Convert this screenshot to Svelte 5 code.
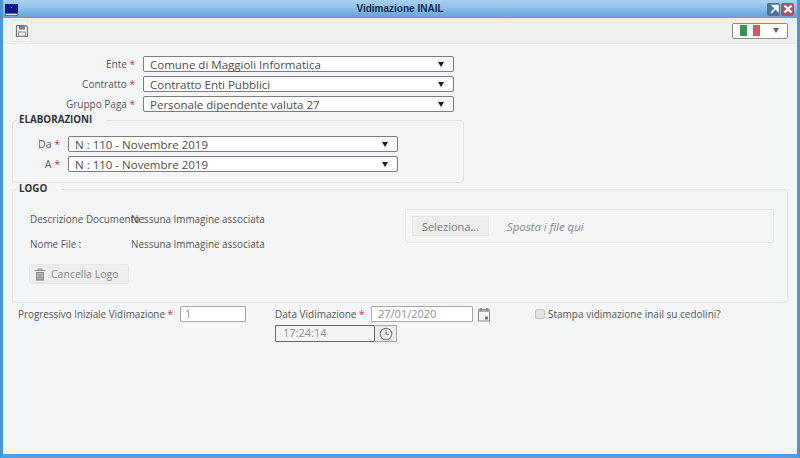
<script>
	const testata = [
		{ label: 'Ente', value: 'Comune di Maggioli Informatica' },
		{ label: 'Contratto', value: 'Contratto Enti Pubblici' },
		{ label: 'Gruppo Paga', value: 'Personale dipendente valuta 27' }
	];
	const elaborazioni = [
		{ label: 'Da', value: 'N : 110 - Novembre 2019' },
		{ label: 'A', value: 'N : 110 - Novembre 2019' }
	];
</script>

<div class="window">
	<header class="titlebar">
		<svg class="logo" width="13" height="12" viewBox="0 0 13 12">
			<rect width="13" height="9" fill="#14148c" />
			<rect y="9" width="13" height="3" fill="#6072a8" />
			<rect x="1" y="10" width="11" height="1" fill="#d8dcec" />
			<rect x="6" y="3" width="1" height="1" fill="#c9b84a" />
		</svg>
		<h1>Vidimazione INAIL</h1>
		<div class="winbtns">
			<span class="winbtn restore">
				<svg width="12" height="12" viewBox="0 0 12 12"><path d="M3 10 L9 4 M4.5 2.5 H10 V8 Z" stroke="#fff" stroke-width="1.6" fill="#fff" /></svg>
			</span>
			<span class="winbtn close">
				<svg width="12" height="12" viewBox="0 0 12 12"><path d="M2.5 2.5 L9.5 9.5 M9.5 2.5 L2.5 9.5" stroke="#fff" stroke-width="2.4" /></svg>
			</span>
		</div>
	</header>

	<div class="toolbar">
		<button class="save" aria-label="Salva">
			<svg width="14" height="14" viewBox="0 0 14 14">
				<path d="M1.5 1.5 H11 L12.5 3 V12.5 H1.5 Z" fill="none" stroke="#777" stroke-width="1.2" />
				<rect x="4" y="1.5" width="6" height="4" fill="#808080" />
				<rect x="3.5" y="8" width="7" height="4" fill="none" stroke="#999" />
			</svg>
		</button>
		<div class="lang">
			<span class="flag"><i class="green"></i><i class="white"></i><i class="red"></i></span>
			<span class="arrow"></span>
		</div>
	</div>

	<main class="content">
		<div class="head-rows">
			{#each testata as row}
				<div class="row">
					<span class="lbl lbl-head">{row.label} <b>*</b></span>
					<div class="select wide"><span>{row.value}</span><i class="arrow dark"></i></div>
				</div>
			{/each}
		</div>

		<fieldset class="box elab">
			<legend>ELABORAZIONI</legend>
			{#each elaborazioni as row}
				<div class="row">
					<span class="lbl lbl-elab">{row.label} <b>*</b></span>
					<div class="select mid"><span>{row.value}</span><i class="arrow dark"></i></div>
				</div>
			{/each}
		</fieldset>

		<fieldset class="box logobox">
			<legend>LOGO</legend>
			<div class="logo-grid">
				<div class="logo-info">
					<div class="info-row"><span class="info-lbl">Descrizione Documento :</span><span class="info-val">Nessuna Immagine associata</span></div>
					<div class="info-row second"><span class="info-lbl">Nome File :</span><span class="info-val">Nessuna Immagine associata</span></div>
					<button class="cancel">
						<svg width="12" height="13" viewBox="0 0 12 13">
							<path d="M1 2.5 H11 M4 2.5 V1 H8 V2.5" stroke="#8a8a8a" fill="none" />
							<path d="M2 4 H10 V12.5 H2 Z" fill="#8a8a8a" />
							<path d="M4 5 V11.5 M6 5 V11.5 M8 5 V11.5" stroke="#eee" stroke-width=".7" />
						</svg>
						Cancella Logo
					</button>
				</div>
				<div class="upload">
					<button class="pick">Seleziona...</button>
					<em>Sposta i file qui</em>
				</div>
			</div>
		</fieldset>

		<div class="bottom">
			<div class="prog">
				<span>Progressivo Iniziale Vidimazione <b>*</b></span>
				<div class="input num">1</div>
			</div>
			<div class="datetime">
				<div class="date-row">
					<span>Data Vidimazione <b>*</b></span>
					<div class="input date">27/01/2020</div>
					<svg class="cal" width="14" height="15" viewBox="0 0 14 15">
						<path d="M1.5 2.5 H12.5 V14 H1.5 Z" fill="none" stroke="#888" />
						<path d="M1 2.5 H13 V5 H1 Z" fill="#aaa" />
						<path d="M4 1 V3.5 M10 1 V3.5" stroke="#777" stroke-width="1.4" />
						<rect x="8" y="9.5" width="3" height="3" fill="#777" />
					</svg>
				</div>
				<div class="time-row">
					<div class="input time">17:24:14</div>
					<span class="clock">
						<svg width="14" height="14" viewBox="0 0 14 14">
							<circle cx="7" cy="7" r="5.8" fill="none" stroke="#777" stroke-width="1.1" />
							<path d="M7 3.5 V7.3 H10" fill="none" stroke="#777" stroke-width="1.1" />
						</svg>
					</span>
				</div>
			</div>
			<label class="check"><i></i>Stampa vidimazione inail su cedolini?</label>
		</div>
	</main>
</div>

<style>
	:global(body) {
		margin: 0;
		background: #f4f5f7;
	}

	.window {
		width: 800px;
		height: 458px;
		box-sizing: border-box;
		display: flex;
		flex-direction: column;
		overflow: hidden;
		border-left: 3px solid #4d94d2;
		border-right: 3px solid #4d94d2;
		border-bottom: 4px solid #5a9bd8;
		font-family: 'Open Sans', sans-serif;
		font-size: 10px;
		color: #555;
		background: #f4f5f7;
	}

	.titlebar {
		height: 18px;
		flex: none;
		margin: 0 -3px;
		padding: 0 6px 0 5px;
		display: flex;
		align-items: center;
		position: relative;
		background: linear-gradient(#a9d0f0, #8fc0ea 45%, #5f9fd9);
	}

	.logo {
		margin-top: 2px;
	}

	h1 {
		position: absolute;
		left: 0;
		right: 0;
		margin: 0;
		text-align: center;
		font-family: 'Liberation Sans', sans-serif;
		font-size: 10px;
		line-height: 18px;
		font-weight: bold;
		color: #14284a;
	}

	.winbtns {
		margin-left: auto;
		display: flex;
		gap: 1px;
		position: relative;
	}

	.winbtn {
		width: 13px;
		height: 13px;
		display: grid;
		place-items: center;
		border-radius: 2px;
	}

	.restore {
		background: #4a7396;
	}

	.close {
		background: #a65560;
	}

	.toolbar {
		height: 26px;
		flex: none;
		display: flex;
		align-items: center;
		justify-content: space-between;
		padding: 0 9px;
		background: #eef0f1;
		border-bottom: 1px solid #e8e9ea;
		box-sizing: border-box;
	}

	.save {
		width: 20px;
		height: 22px;
		padding: 0;
		margin: 0;
		display: grid;
		place-items: center;
		background: #f1f2f3;
		border: 1px solid #e7e8e9;
	}

	.lang {
		width: 56px;
		height: 16px;
		box-sizing: border-box;
		display: flex;
		align-items: center;
		justify-content: space-between;
		padding: 0 8px 0 7px;
		background: #fff;
		border: 1px solid #8c8c8c;
		border-radius: 2px;
	}

	.flag {
		display: flex;
		height: 11px;
		width: 20px;
	}

	.flag i {
		flex: 1;
	}

	.green {
		background: #3a9160;
	}

	.white {
		background: #fafafa;
	}

	.red {
		background: #cf5a66;
	}

	.arrow {
		width: 0;
		height: 0;
		border-left: 3.5px solid transparent;
		border-right: 3.5px solid transparent;
		border-top: 5px solid #666;
	}

	.arrow.dark {
		border-top-color: #1e1e1e;
	}

	.content {
		flex: 1;
		padding: 10px 9px 0;
	}

	.row {
		display: flex;
		align-items: center;
		gap: 8px;
		height: 20px;
	}

	.lbl {
		text-align: right;
		white-space: nowrap;
		flex: none;
	}

	.lbl-head {
		width: 123px;
	}

	.lbl-elab {
		width: 47px;
		font-size: 10.5px;
	}

	b {
		color: #c8333f;
		font-weight: normal;
	}

	.select {
		height: 16px;
		box-sizing: border-box;
		display: flex;
		align-items: center;
		justify-content: space-between;
		padding: 0 9px 0 6px;
		background: #fff;
		border: 1px solid #7d7d7d;
		border-radius: 2px;
		font-size: 11.5px;
		color: #4d4d4d;
	}

	.wide {
		width: 311px;
	}

	.mid {
		width: 330px;
	}

	.box {
		margin: 0;
		padding: 0;
		min-width: 0;
		box-sizing: border-box;
		border: 1px solid #e2e3e5;
		border-radius: 4px;
	}

	legend {
		margin-left: 4px;
		padding: 0 14px 0 2px;
		font-size: 9.8px;
		line-height: 12px;
		font-weight: 700;
		color: #333;
	}

	.elab {
		width: 452px;
		height: 69px;
		padding-top: 8px;
	}

	.logobox {
		height: 120px;
	}

	.logo-grid {
		display: flex;
		justify-content: space-between;
		padding: 0 13px 0 17px;
	}

	.logo-info {
		padding-top: 17px;
	}

	.info-row {
		display: flex;
		height: 14px;
		line-height: 14px;
		font-size: 9.9px;
		white-space: nowrap;
	}

	.second {
		margin-top: 11px;
	}

	.info-lbl {
		width: 101px;
		flex: none;
	}

	.cancel {
		margin: 13px 0 0 -1px;
		width: 100px;
		height: 20px;
		padding: 0 0 0 4px;
		display: flex;
		align-items: center;
		gap: 5px;
		font: 10.5px 'Open Sans', sans-serif;
		color: #8a8a8a;
		background: #edeeef;
		border: 1px solid #e6e7e8;
		border-radius: 2px;
	}

	.upload {
		width: 369px;
		height: 34px;
		margin-top: 14px;
		box-sizing: border-box;
		display: flex;
		align-items: center;
		gap: 18px;
		padding-left: 6px;
		border: 1px solid #e4e5e7;
		border-radius: 2px;
	}

	.pick {
		width: 77px;
		height: 20px;
		padding: 0;
		font: 11px 'Open Sans', sans-serif;
		color: #808080;
		background: #edeeef;
		border: 1px solid #e6e7e8;
	}

	em {
		font-size: 11.4px;
		color: #8a8a8a;
	}

	.bottom {
		display: flex;
		align-items: flex-start;
		padding: 3px 0 0 6px;
	}

	.prog,
	.date-row {
		display: flex;
		align-items: center;
		white-space: nowrap;
	}

	.prog {
		width: 257px;
		gap: 7px;
		font-size: 9.9px;
	}

	.input {
		height: 16px;
		box-sizing: border-box;
		padding-left: 6px;
		line-height: 14px;
		font-size: 11px;
		color: #909090;
		background: #fff;
		border: 1px solid #a8a8a8;
		border-radius: 1px;
	}

	.num {
		width: 66px;
		padding-left: 4px;
	}

	.date {
		width: 102px;
	}

	.date-row {
		height: 16px;
		gap: 7px;
	}

	.date-row span {
		width: 89px;
	}

	.cal {
		margin-left: -3px;
	}

	.time-row {
		display: flex;
		margin-top: 3px;
	}

	.time {
		width: 100px;
		height: 17px;
		padding-left: 7px;
		background: #f3f4f5;
		border-color: #666;
	}

	.clock {
		width: 22px;
		height: 17px;
		box-sizing: border-box;
		display: grid;
		place-items: center;
		background: #eceded;
		border: 1px solid #a8a8a8;
		border-left: 0;
	}

	.datetime {
		width: 260px;
	}

	.check {
		display: flex;
		align-items: center;
		gap: 3px;
		height: 16px;
		white-space: nowrap;
		font-size: 10px;
	}

	.check i {
		width: 10px;
		height: 10px;
		box-sizing: border-box;
		background: #e6e6e6;
		border: 1px solid #c4c4c4;
		border-radius: 2px;
	}
</style>
